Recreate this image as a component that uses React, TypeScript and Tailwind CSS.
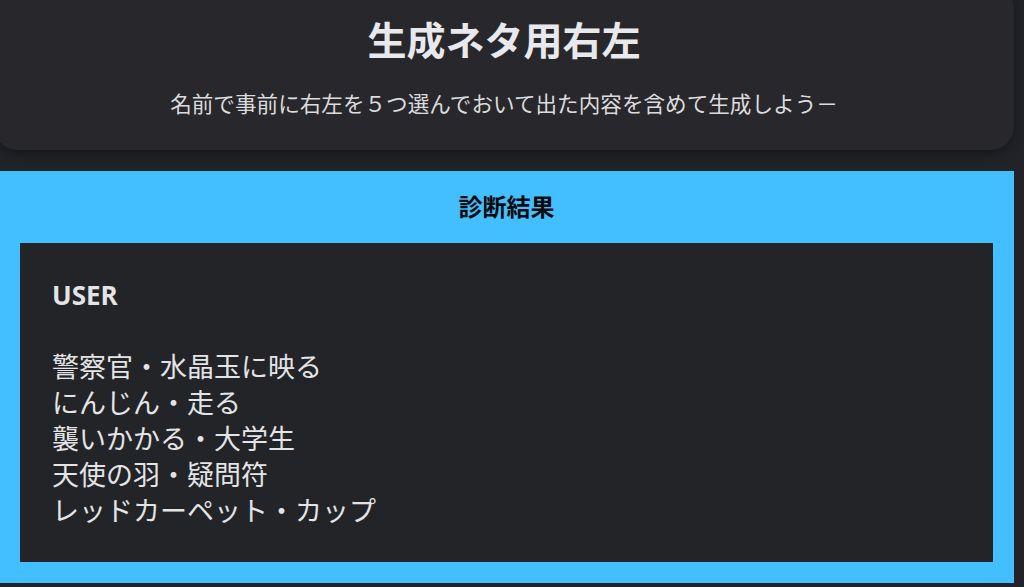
const lines = [
	"警察官・水晶玉に映る",
	"にんじん・走る",
	"襲いかかる・大学生",
	"天使の羽・疑問符",
	"レッドカーペット・カップ",
];

export default function App() {
	return (
		<div className="min-h-[587px] w-[1024px] overflow-hidden bg-[#222328] font-['Open_Sans','Noto_Sans_CJK_JP',sans-serif]">
			<div className="w-[1020px] -ml-[6px] -mt-[16px]">
				<header className="flex h-[166px] flex-col items-center rounded-[24px] bg-[#28282c] pt-[28px] shadow-[0_4px_12px_rgba(0,0,0,0.35)]">
					<h1 className="text-[39px] font-bold leading-[56px] text-[#e8e9ec]">生成ネタ用右左</h1>
					<p className="mt-[20px] text-[21.6px] leading-[32px] text-[#dcdcde]">
						名前で事前に右左を５つ選んでおいて出た内容を含めて生成しよう－
					</p>
				</header>
			</div>
			<section className="mt-[21px] w-[1014px] bg-[#43bfff] pt-[20px] pb-[21px] pl-[20px] pr-[21px]">
				<h2 className="text-center text-[24px] font-bold leading-[32px] text-[#0c0c0e]">診断結果</h2>
				<div className="mt-[20px] bg-[#222428] pt-[34px] pb-[33px] pl-[32px] text-[#e4e4e6]">
					<div className="text-[26px] font-bold leading-[36px]">USER</div>
					<div className="mt-[36px] text-[27px] leading-[36px]">
						{lines.map((l) => (
							<div key={l}>{l}</div>
						))}
					</div>
				</div>
			</section>
		</div>
	);
}
